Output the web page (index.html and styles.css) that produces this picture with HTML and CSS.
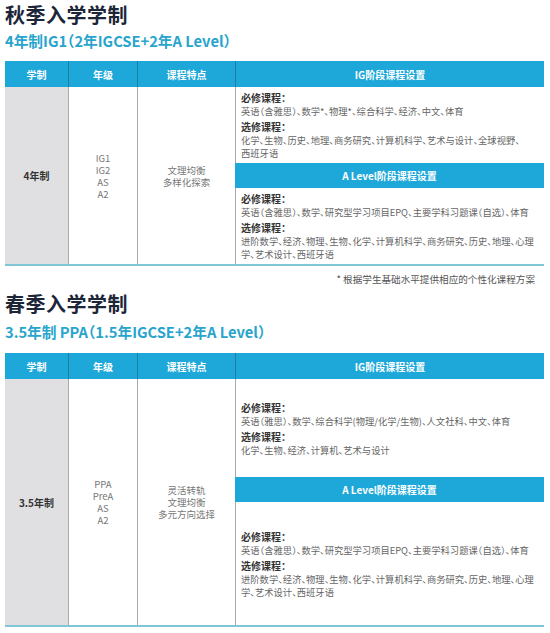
FILE: index.html
```html
<!DOCTYPE html>
<html lang="zh-CN">
<head>
<meta charset="utf-8">
<title>入学学制</title>
<link rel="stylesheet" href="styles.css">
</head>
<body>
<section class="block">
  <h1 class="title">秋季入学学制</h1>
  <h2 class="subtitle">4年制IG1（2年IGCSE+2年A Level）</h2>
  <div class="tbl">
    <div class="thead">
      <div class="th c1">学制</div>
      <div class="th c2">年级</div>
      <div class="th c3">课程特点</div>
      <div class="th c4">IG阶段课程设置</div>
    </div>
    <div class="tbody">
      <div class="td c1 sys">4年制</div>
      <div class="td c2"><div class="ln">IG1</div><div class="ln">IG2</div><div class="ln">AS</div><div class="ln">A2</div></div>
      <div class="td c3"><div class="ln">文理均衡</div><div class="ln">多样化探索</div></div>
      <div class="c4 stages">
        <div class="stage h76">
          <div class="lbl">必修课程：</div>
          <div class="txt">英语（含雅思）、数学*、物理*、综合科学、经济、中文、体育</div>
          <div class="lbl gap">选修课程：</div>
          <div class="txt">化学、生物、历史、地理、商务研究、计算机科学、艺术与设计、全球视野、<br>西班牙语</div>
        </div>
        <div class="bar">A Level阶段课程设置</div>
        <div class="stage h76">
          <div class="lbl">必修课程：</div>
          <div class="txt">英语（含雅思）、数学、研究型学习项目EPQ、主要学科习题课（自选）、体育</div>
          <div class="lbl gap">选修课程：</div>
          <div class="txt">进阶数学、经济、物理、生物、化学、计算机科学、商务研究、历史、地理、心理<br>学、艺术设计、西班牙语</div>
        </div>
      </div>
    </div>
  </div>
  <p class="note">* 根据学生基础水平提供相应的个性化课程方案</p>
</section>

<section class="block second">
  <h1 class="title">春季入学学制</h1>
  <h2 class="subtitle">3.5年制 PPA（1.5年IGCSE+2年A Level）</h2>
  <div class="tbl">
    <div class="thead">
      <div class="th c1">学制</div>
      <div class="th c2">年级</div>
      <div class="th c3">课程特点</div>
      <div class="th c4">IG阶段课程设置</div>
    </div>
    <div class="tbody">
      <div class="td c1 sys">3.5年制</div>
      <div class="td c2"><div class="ln">PPA</div><div class="ln">PreA</div><div class="ln">AS</div><div class="ln">A2</div></div>
      <div class="td c3"><div class="ln">灵活转轨</div><div class="ln">文理均衡</div><div class="ln">多元方向选择</div></div>
      <div class="c4 stages">
        <div class="stage h98">
          <div class="lbl">必修课程：</div>
          <div class="txt">英语（雅思）、数学、综合科学(物理/化学/生物)、人文社科、中文、体育</div>
          <div class="lbl gap">选修课程：</div>
          <div class="txt">化学、生物、经济、计算机、艺术与设计</div>
        </div>
        <div class="bar">A Level阶段课程设置</div>
        <div class="stage h123">
          <div class="lbl">必修课程：</div>
          <div class="txt">英语（含雅思）、数学、研究型学习项目EPQ、主要学科习题课（自选）、体育</div>
          <div class="lbl gap">选修课程：</div>
          <div class="txt">进阶数学、经济、物理、生物、化学、计算机科学、商务研究、历史、地理、心理<br>学、艺术设计、西班牙语</div>
        </div>
      </div>
    </div>
  </div>
</section>
</body>
</html>
```

FILE: styles.css
```css
* { box-sizing: border-box; }
html, body { margin: 0; padding: 0; background: #fff; }
body {
  padding: 3px 0 0 5px;
  font-family: "Noto Sans CJK SC", "Noto Sans", sans-serif;
  color: #666;
}
.title {
  margin: 0;
  font-size: 20px;
  line-height: 24px;
  font-weight: 700;
  color: #1d2538;
  letter-spacing: 0.5px;
}
.subtitle {
  margin: 4px 0 0;
  font-size: 14.7px;
  line-height: 20px;
  font-weight: 700;
  color: #28a4cd;
  font-feature-settings: "halt";
}
.second { margin-top: 6px; }
.second .subtitle { margin-top: 6px; }
.second .tbl { margin-top: 11px; }
.tbl {
  width: 539px;
  margin-top: 10px;
  border-bottom: 2px solid #7fc7d6;
}
.thead {
  display: flex;
  height: 26px;
  background: #1ea8d9;
}
.th {
  display: flex;
  align-items: center;
  justify-content: center;
  color: #fff;
  font-size: 10px;
  font-weight: 700;
  border-left: 1px solid rgba(40, 70, 90, 0.45);
}
.th.c1 { border-left: none; }
.c1 { width: 63px; flex: none; }
.c2 { width: 69px; flex: none; }
.c3 { width: 98px; flex: none; }
.c4 { flex: 1; }
.tbody { display: flex; }
.td {
  display: flex;
  flex-direction: column;
  align-items: center;
  justify-content: center;
  text-align: center;
  font-size: 9.5px;
  color: #777;
  border-left: 1px solid #a9a9a9;
}
.td.c1 { border-left: none; }
.ln {
  height: 12px;
  line-height: 12px;
  white-space: nowrap;
}
.sys {
  background: #e0e0e2;
  color: #333;
  font-size: 10px;
  font-weight: 700;
}
.stages {
  display: flex;
  flex-direction: column;
  border-left: 1px solid #a9a9a9;
}
.stage {
  display: flex;
  flex-direction: column;
  justify-content: center;
  padding: 0 4px 0 5px;
  font-feature-settings: "halt";
}
.h76 { height: 76px; }
.h98 { height: 98px; }
.h123 { height: 123px; }
.bar {
  height: 25px;
  margin-left: -1px;
  display: flex;
  align-items: center;
  justify-content: center;
  background: #1ea8d9;
  color: #fff;
  font-size: 10px;
  font-weight: 700;
}
.lbl {
  font-size: 10px;
  line-height: 15px;
  font-weight: 700;
  color: #333;
}
.lbl.gap { margin-top: 1px; }
.txt {
  font-size: 9.3px;
  line-height: 13px;
  color: #666;
  white-space: nowrap;
}
.note {
  width: 539px;
  margin: 6px 0 0;
  padding-right: 9px;
  text-align: right;
  font-size: 9.6px;
  line-height: 14px;
  color: #555;
}
```
